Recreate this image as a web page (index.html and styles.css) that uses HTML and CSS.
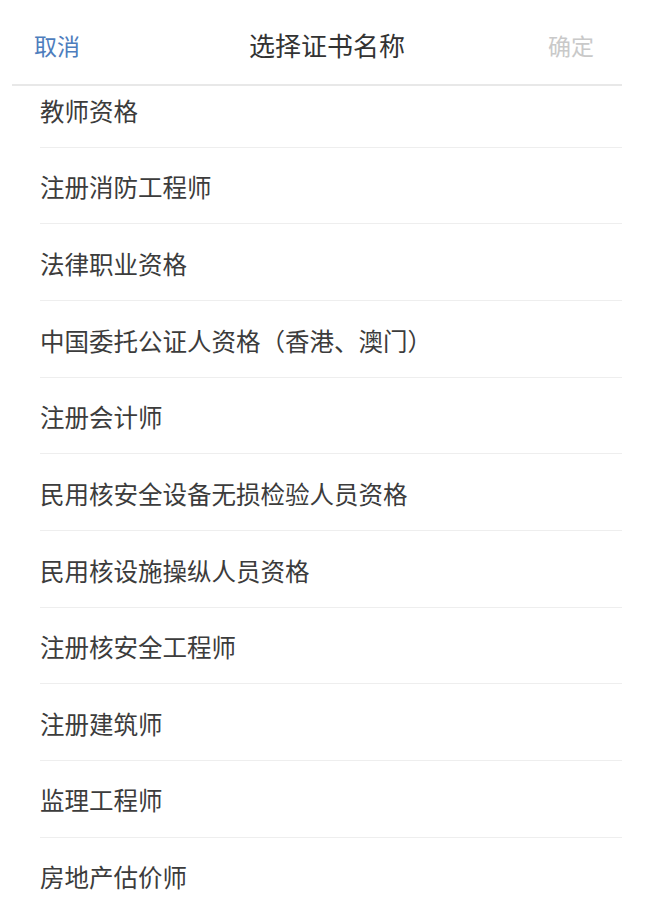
FILE: index.html
```html
<!DOCTYPE html>
<html lang="zh-CN">
<head>
<meta charset="utf-8">
<title>选择证书名称</title>
<link rel="stylesheet" href="styles.css">
</head>
<body>
<div class="sheet">
  <header class="bar">
    <span class="bar-btn cancel">取消</span>
    <span class="bar-title">选择证书名称</span>
    <span class="bar-btn confirm">确定</span>
  </header>
  <div class="list-viewport">
    <ul class="list">
      <li class="item first">教师资格</li>
      <li class="item">注册消防工程师</li>
      <li class="item">法律职业资格</li>
      <li class="item">中国委托公证人资格（香港、澳门）</li>
      <li class="item">注册会计师</li>
      <li class="item">民用核安全设备无损检验人员资格</li>
      <li class="item">民用核设施操纵人员资格</li>
      <li class="item">注册核安全工程师</li>
      <li class="item">注册建筑师</li>
      <li class="item">监理工程师</li>
      <li class="item">房地产估价师</li>
    </ul>
  </div>
</div>
</body>
</html>
```

FILE: styles.css
```css
html, body {
  margin: 0;
  padding: 0;
  background: #ffffff;
}

body {
  font-family: "Noto Sans CJK SC", "Noto Sans", sans-serif;
  width: 648px;
  height: 911px;
  overflow: hidden;
}

.sheet {
  display: flex;
  flex-direction: column;
  height: 911px;
}

.bar {
  box-sizing: border-box;
  height: 86px;
  margin: 0 26px 0 12px;
  padding: 6px 28px 0 22px;
  display: flex;
  align-items: center;
  justify-content: space-between;
  border-bottom: 2px solid #e8e8e8;
  flex: none;
}

.bar-btn {
  font-size: 23px;
  line-height: 1;
}

.cancel {
  color: #4d7dbd;
}

.confirm {
  color: #c9c9c9;
}

.bar-title {
  font-size: 26px;
  line-height: 1;
  color: #333333;
  margin-left: 26px;
}

.list-viewport {
  flex: 1;
  overflow: hidden;
}

.list {
  list-style: none;
  margin: 0 26px 0 40px;
  padding: 0;
}

.item {
  box-sizing: border-box;
  height: 76.67px;
  padding-top: 4px;
  display: flex;
  align-items: center;
  border-bottom: 1px solid #eeeeee;
  font-size: 24.5px;
  line-height: 1;
  color: #3c3c3c;
  white-space: nowrap;
}

.item.first {
  margin-top: -15px;
}
```
